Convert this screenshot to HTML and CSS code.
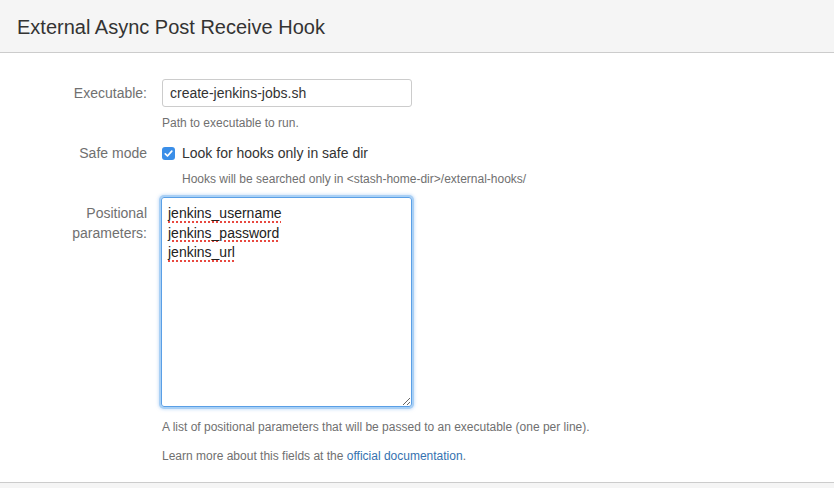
FILE: index.html
```html
<!DOCTYPE html>
<html>
<head>
<meta charset="utf-8">
<link rel="stylesheet" href="styles.css">
</head>
<body>
<div class="dialog">
  <header class="dialog-header">
    <h2 class="dialog-title">External Async Post Receive Hook</h2>
  </header>
  <form class="dialog-body">
    <div class="field-row">
      <label class="field-label label-input">Executable:</label>
      <div class="field-main">
        <div class="text-input">create-jenkins-jobs.sh</div>
        <div class="description desc-exec">Path to executable to run.</div>
      </div>
    </div>
    <div class="field-row row-safe">
      <label class="field-label">Safe mode</label>
      <div class="field-main">
        <div class="checkbox-line">
          <span class="checkbox"><svg viewBox="0 0 13 13" width="13" height="13"><path d="M3.3 6.8 L5.5 9 L9.8 4.1" fill="none" stroke="#fff" stroke-width="1.7" stroke-linecap="round" stroke-linejoin="round"/></svg></span>
          <span class="checkbox-label">Look for hooks only in safe dir</span>
        </div>
        <div class="description desc-safe">Hooks will be searched only in &lt;stash-home-dir&gt;/external-hooks/</div>
      </div>
    </div>
    <div class="field-row row-params">
      <label class="field-label label-params">Positional<br>parameters:</label>
      <div class="field-main">
        <div class="textarea"><span class="misspelled">jenkins_username</span><br><span class="misspelled">jenkins_password</span><br><span class="misspelled">jenkins_url</span></div>
        <div class="description desc-params">A list of positional parameters that will be passed to an executable (one per line).</div>
        <div class="description desc-learn">Learn more about this fields at the <a class="link" href="#">official documentation</a>.</div>
      </div>
    </div>
  </form>
  <footer class="dialog-footer"></footer>
</div>
</body>
</html>
```

FILE: styles.css
```css
html, body {
  margin: 0;
  padding: 0;
  background: #ffffff;
}
body {
  font-family: "Liberation Sans", Arial, Helvetica, sans-serif;
  color: #333333;
  width: 834px;
  height: 488px;
  overflow: hidden;
}
.dialog {
  display: flex;
  flex-direction: column;
  height: 488px;
}
.dialog-header {
  background: #f5f5f5;
  border-bottom: 1px solid #cccccc;
  height: 53px;
  box-sizing: border-box;
  padding: 0 17px;
  display: flex;
  align-items: center;
}
.dialog-title {
  margin: 0;
  font-size: 20px;
  font-weight: normal;
  color: #333333;
  line-height: 1;
  padding-top: 1px;
}
.dialog-body {
  padding-top: 26px;
  flex: 0 0 auto;
  height: 429px;
  box-sizing: border-box;
}
.field-row {
  display: flex;
  gap: 15px;
}
.field-label {
  width: 147px;
  flex: 0 0 147px;
  text-align: right;
  font-size: 14px;
  color: #707070;
  line-height: 20px;
}
.label-input {
  padding-top: 4px;
}
.field-main {
  display: flex;
  flex-direction: column;
}
.text-input {
  width: 250px;
  height: 28px;
  box-sizing: border-box;
  border: 1px solid #cccccc;
  border-radius: 3px;
  padding: 0 7px;
  font-size: 14px;
  line-height: 27px;
  color: #333333;
}
.description {
  font-size: 12px;
  line-height: 16px;
  color: #707070;
}
.desc-exec {
  margin-top: 8px;
}
.row-safe {
  margin-top: 12px;
}
.checkbox-line {
  display: flex;
  align-items: center;
  gap: 7px;
  height: 20px;
}
.checkbox {
  width: 13px;
  height: 13px;
  border-radius: 3px;
  background: #3a8ee8;
  display: block;
}
.checkbox svg {
  display: block;
}
.checkbox-label {
  font-size: 14px;
  line-height: 20px;
  color: #333333;
}
.desc-safe {
  margin-top: 8px;
  margin-left: 20px;
}
.row-params {
  margin-top: 10px;
}
.label-params {
  padding-top: 6px;
}
.textarea {
  width: 251px;
  height: 210px;
  box-sizing: border-box;
  margin-left: -1px;
  border: 1px solid #5a9fe6;
  border-radius: 3px;
  box-shadow: 0 0 0 2px #a9d0f5, 0 0 3px 3px rgba(130, 180, 240, 0.35);
  padding: 6px 6px;
  font-size: 14px;
  line-height: 19.5px;
  color: #222222;
  overflow: auto;
  resize: vertical;
}
.misspelled {
  text-decoration: underline dotted #e8483f;
  text-decoration-thickness: 1.5px;
  text-underline-offset: 3px;
}
.desc-params {
  margin-top: 12px;
}
.desc-learn {
  margin-top: 13px;
}
.link {
  color: #3572b0;
  text-decoration: none;
}
.dialog-footer {
  flex: 1 1 auto;
  background: #f5f5f5;
  border-top: 1px solid #cccccc;
}
```
